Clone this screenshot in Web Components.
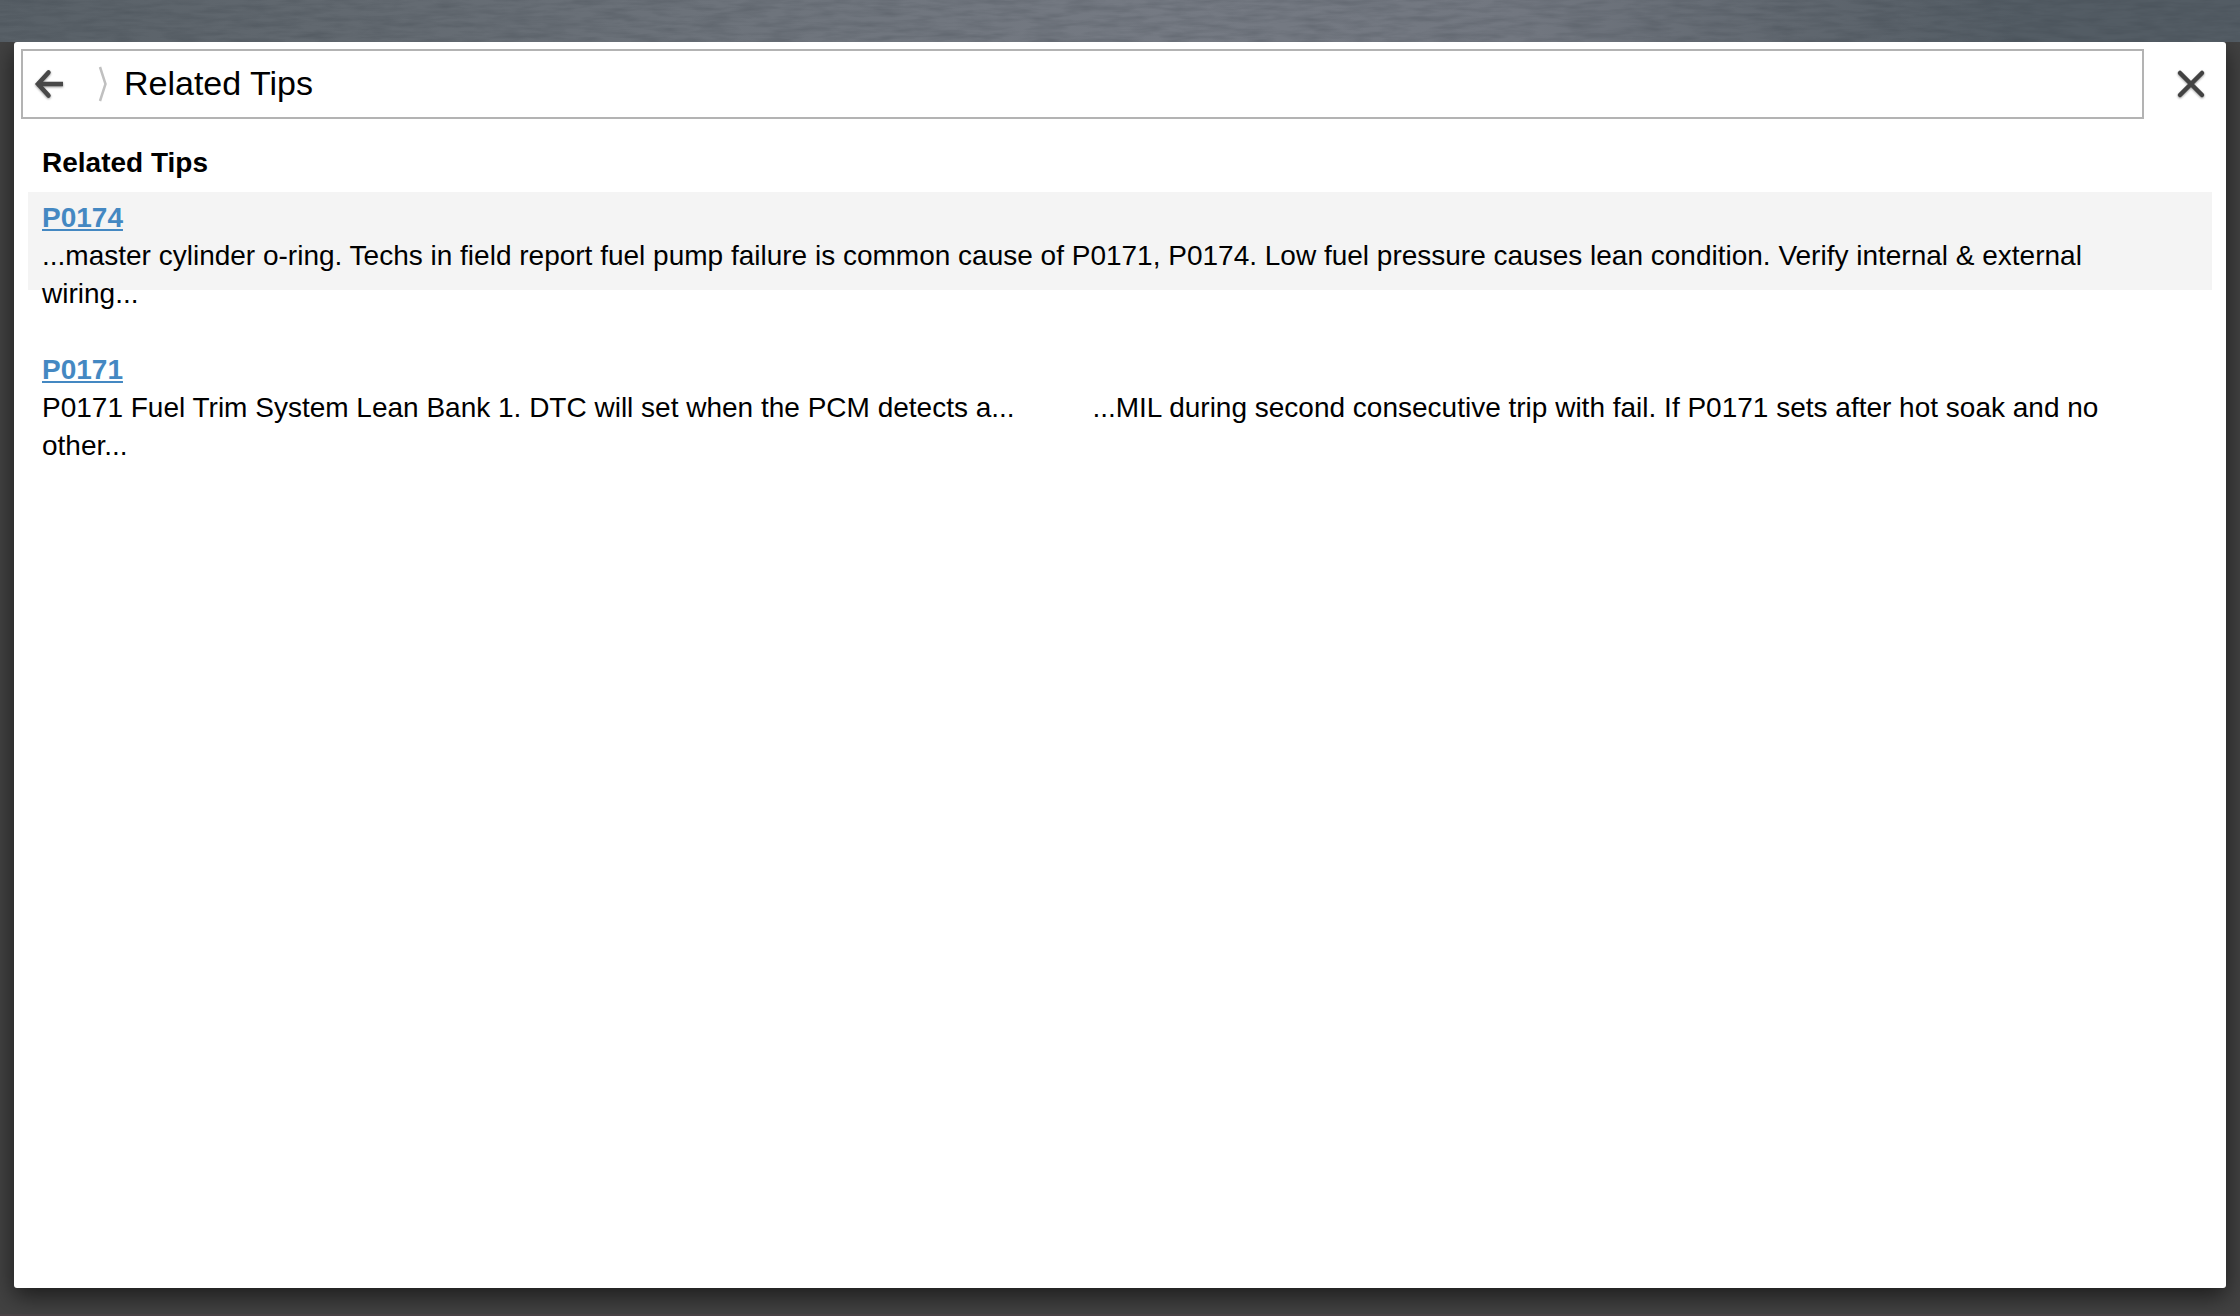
<!DOCTYPE html>
<html lang="en">
<head>
<meta charset="utf-8">
<title>Related Tips</title>
<style>
  body { margin: 0; background: #424242; color: #000; font: 28px/38px "Liberation Sans", Arial, sans-serif; }
</style>
</head>
<body>
<tips-page>
  <metal-strip></metal-strip>
  <tips-dialog>
    <tips-toolbar slot="toolbar">Related Tips</tips-toolbar>
    <tip-list>
      <span slot="title">Related Tips</span>
      <tip-item code="P0174" shaded>...master cylinder o-ring. Techs in field report fuel pump failure is common cause of P0171, P0174. Low fuel pressure causes lean condition. Verify internal &amp; external wiring...</tip-item>
      <tip-item code="P0171">P0171 Fuel Trim System Lean Bank 1. DTC will set when the PCM detects a...&nbsp;&nbsp;&nbsp;&nbsp;&nbsp;&nbsp;&nbsp;&nbsp;&nbsp; ...MIL during second consecutive trip with fail. If P0171 sets after hot soak and no other...</tip-item>
    </tip-list>
  </tips-dialog>
</tips-page>
<script>
const define = (name, html, setup) => {
  const template = document.createElement('template');
  template.innerHTML = html;
  customElements.define(name, class extends HTMLElement {
    constructor() {
      super();
      this.attachShadow({ mode: 'open' }).append(template.content.cloneNode(true));
    }
    connectedCallback() { if (setup) setup(this, this.shadowRoot); }
  });
};

define('tips-page', `
  <style>
    :host { display: flex; flex-direction: column; min-height: 100vh; box-sizing: border-box; border-bottom: 2px solid #4a4346; }
  </style>
  <slot></slot>`);

// Brushed metal strip above the dialog
define('metal-strip', `
  <style>
    :host { display: block; height: 42px; position: relative; z-index: 1; overflow: hidden;
      background: linear-gradient(90deg, #586067 0%, #61686f 14%, #6d737b 32%, #757a83 52%, #727780 68%, #60676f 80%, #535c64 90%, #535c64 100%); }
    svg { display: block; width: 100%; height: 100%; }
  </style>
  <svg aria-hidden="true">
    <filter id="grain" x="0" y="0" width="100%" height="100%" color-interpolation-filters="sRGB">
      <feTurbulence type="fractalNoise" baseFrequency="0.03 0.18" numOctaves="3" seed="8"/>
      <feColorMatrix values="0 0 0 0 0.16  0 0 0 0 0.19  0 0 0 0 0.22  0.35 0 0 0 -0.12"/>
    </filter>
    <rect width="100%" height="100%" filter="url(#grain)"/>
  </svg>`);

define('tips-dialog', `
  <style>
    :host { display: flex; flex-direction: column; flex: 1; margin: 0 14px 26px; padding-top: 7px; box-sizing: border-box;
      background: #fff; border-radius: 3px; box-shadow: 0 8px 24px rgba(0, 0, 0, .6); }
  </style>
  <slot name="toolbar"></slot>
  <slot></slot>`);

define('tips-toolbar', `
  <style>
    :host { display: flex; align-items: center; }
    .path { flex: 1; display: flex; align-items: center; height: 70px; box-sizing: border-box; margin-left: 7px; border: 2px solid #b3b3b3; }
    button { padding: 0; border: 0; background: none; display: flex; align-items: center; justify-content: center; }
    svg { display: block; overflow: visible; }
    .back { width: 52px; height: 66px; }
    .sep { margin: 0 17px 0 25px; }
    .close { width: 82px; height: 70px; padding-left: 12px; }
    .icon { filter: drop-shadow(0 1px 1px rgba(0, 0, 0, .4)); }
    h1 { margin: 0; padding-bottom: 2px; font-size: 34px; line-height: 38px; font-weight: 400; }
  </style>
  <div class="path">
    <button class="back" type="button" aria-label="Back">
      <svg class="icon" width="28" height="28" viewBox="0 0 28 28" fill="none" stroke="#484848" stroke-width="4.5">
        <path d="M2 14H28"/><path d="M13.5 2.500 3 14l10.500 11.500" stroke-linecap="round"/>
      </svg>
    </button>
    <svg class="sep" width="7" height="34" viewBox="0 0 7 34" fill="none" stroke="#c0c0c0" stroke-width="2.500"><path d="M0 0 5.500 17 0 34"/></svg>
    <h1><slot></slot></h1>
  </div>
  <button class="close" type="button" aria-label="Close">
    <svg class="icon" width="28" height="28" viewBox="0 0 28 28" fill="none" stroke="#424242" stroke-width="4.500" stroke-linecap="round"><path d="M3 3 25 25M25 3 3 25"/></svg>
  </button>`);

define('tip-list', `
  <style>
    :host { display: block; padding: 25px 14px 0; }
    h2 { margin: 0 0 10px; padding: 0 14px; font-size: 28px; line-height: 38px; font-weight: 700; }
  </style>
  <h2><slot name="title"></slot></h2>
  <slot></slot>`);

define('tip-item', `
  <style>
    :host { display: block; padding: 7px 44px 31px 14px; }
    :host([shaded]) { background: linear-gradient(#f4f4f4, #f4f4f4) 0 0 / 100% 98px no-repeat; }
    a { color: #4488c2; font-weight: 700; text-decoration: underline; }
    p { margin: 0; }
  </style>
  <a href="#"></a>
  <p><slot></slot></p>`, (host, root) => { root.querySelector('a').textContent = host.getAttribute('code'); });
</script>
</body>
</html>
